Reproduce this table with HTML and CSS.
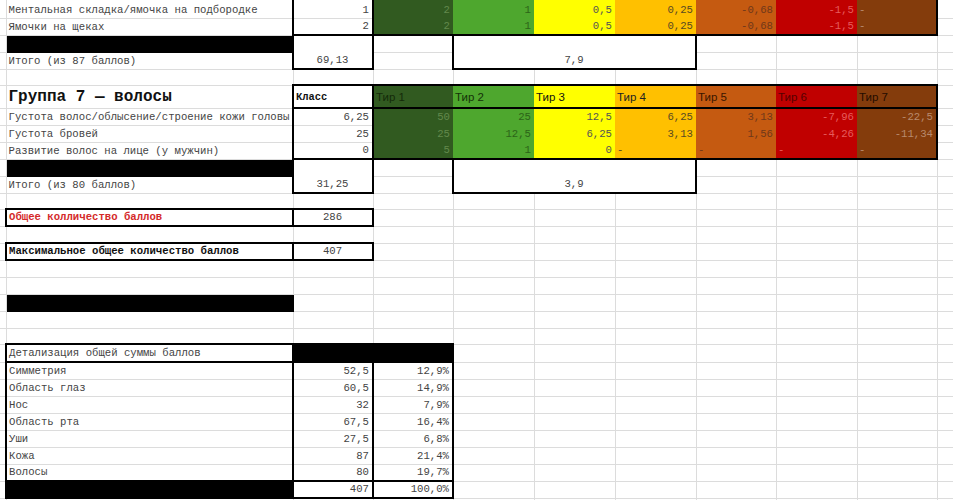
FILE: index.html
```html
<!DOCTYPE html>
<html lang="ru">
<head>
<meta charset="utf-8">
<title>Группа 7 — волосы</title>
<link rel="stylesheet" href="styles.css">
</head>
<body>
<table class="sheet">
<colgroup>
<col class="c0"><col class="ca"><col class="cb"><col class="cc"><col class="cd"><col class="ce"><col class="cf"><col class="cg"><col class="ch"><col class="ci"><col class="cj">
</colgroup>
<tbody>
<tr class="h18 first"><td></td><td>Ментальная складка/ямочка на подбородке</td><td class="num bl br">1</td><td class="num t t1">2</td><td class="num t t2">1</td><td class="num t t3">0,5</td><td class="num t t4">0,25</td><td class="num t t5">-0,68</td><td class="num t t6">-1,5</td><td class="t t7 br">-</td><td></td></tr>
<tr class="h17"><td></td><td>Ямочки на щеках</td><td class="num bl br bb">2</td><td class="num t t1 bb">2</td><td class="num t t2 bb">1</td><td class="num t t3 bb">0,5</td><td class="num t t4 bb">0,25</td><td class="num t t5 bb">-0,68</td><td class="num t t6 bb">-1,5</td><td class="t t7 br bb">-</td><td></td></tr>
<tr class="h17"><td></td><td class="blk"></td><td class="ctr bx" rowspan="2">69,13</td><td></td><td class="ctr bx" colspan="3" rowspan="2">7,9</td><td></td><td></td><td></td><td></td></tr>
<tr class="h17"><td></td><td>Итого (из 87 баллов)</td><td></td><td></td><td></td><td></td><td></td></tr>
<tr class="h16"><td></td><td></td><td></td><td></td><td></td><td></td><td></td><td></td><td></td><td></td><td></td></tr>
<tr class="h23"><td></td><td class="grp">Группа 7 — волосы</td><td class="kl bt bl br bb">Класс</td><td class="th t t1 bt bb">Тир 1</td><td class="th t t2 bt bb">Тир 2</td><td class="th t t3 bt bb">Тир 3</td><td class="th t t4 bt bb">Тир 4</td><td class="th t t5 bt bb">Тир 5</td><td class="th t t6 bt bb">Тир 6</td><td class="th t t7 bt br bb">Тир 7</td><td></td></tr>
<tr class="h17"><td></td><td>Густота волос/облысение/строение кожи головы</td><td class="num bl br">6,25</td><td class="num t t1">50</td><td class="num t t2">25</td><td class="num t t3">12,5</td><td class="num t t4">6,25</td><td class="num t t5">3,13</td><td class="num t t6">-7,96</td><td class="num t t7 br">-22,5</td><td></td></tr>
<tr class="h17"><td></td><td>Густота бровей</td><td class="num bl br">25</td><td class="num t t1">25</td><td class="num t t2">12,5</td><td class="num t t3">6,25</td><td class="num t t4">3,13</td><td class="num t t5">1,56</td><td class="num t t6">-4,26</td><td class="num t t7 br">-11,34</td><td></td></tr>
<tr class="h17"><td></td><td>Развитие волос на лице (у мужчин)</td><td class="num bl br bb">0</td><td class="num t t1 bb">5</td><td class="num t t2 bb">1</td><td class="num t t3 bb">0</td><td class="t t4 bb">-</td><td class="t t5 bb">-</td><td class="t t6 bb">-</td><td class="t t7 br bb">-</td><td></td></tr>
<tr class="h17"><td></td><td class="blk"></td><td class="ctr bx" rowspan="2">31,25</td><td></td><td class="ctr bx" colspan="3" rowspan="2">3,9</td><td></td><td></td><td></td><td></td></tr>
<tr class="h17"><td></td><td>Итого (из 80 баллов)</td><td></td><td></td><td></td><td></td><td></td></tr>
<tr class="h16"><td></td><td></td><td></td><td></td><td></td><td></td><td></td><td></td><td></td><td></td><td></td></tr>
<tr class="h17"><td></td><td class="bx red">Общее колличество баллов</td><td class="ctr bx">286</td><td></td><td></td><td></td><td></td><td></td><td></td><td></td><td></td></tr>
<tr class="h17"><td></td><td></td><td></td><td></td><td></td><td></td><td></td><td></td><td></td><td></td><td></td></tr>
<tr class="h17"><td></td><td class="bx strong">Максимальное общее количество баллов</td><td class="ctr bx">407</td><td></td><td></td><td></td><td></td><td></td><td></td><td></td><td></td></tr>
<tr class="h17"><td></td><td></td><td></td><td></td><td></td><td></td><td></td><td></td><td></td><td></td><td></td></tr>
<tr class="h17"><td></td><td></td><td></td><td></td><td></td><td></td><td></td><td></td><td></td><td></td><td></td></tr>
<tr class="h17"><td></td><td class="blk"></td><td></td><td></td><td></td><td></td><td></td><td></td><td></td><td></td><td></td></tr>
<tr class="h17"><td></td><td></td><td></td><td></td><td></td><td></td><td></td><td></td><td></td><td></td><td></td></tr>
<tr class="h16"><td></td><td></td><td></td><td></td><td></td><td></td><td></td><td></td><td></td><td></td><td></td></tr>
<tr class="h18"><td></td><td class="bx">Детализация общей суммы баллов</td><td class="blk bt bb"></td><td class="blk bt br bb"></td><td></td><td></td><td></td><td></td><td></td><td></td><td></td></tr>
<tr class="h17"><td></td><td class="bl">Симметрия</td><td class="num bl br">52,5</td><td class="num br">12,9%</td><td></td><td></td><td></td><td></td><td></td><td></td><td></td></tr>
<tr class="h17"><td></td><td class="bl">Область глаз</td><td class="num bl br">60,5</td><td class="num br">14,9%</td><td></td><td></td><td></td><td></td><td></td><td></td><td></td></tr>
<tr class="h17"><td></td><td class="bl">Нос</td><td class="num bl br">32</td><td class="num br">7,9%</td><td></td><td></td><td></td><td></td><td></td><td></td><td></td></tr>
<tr class="h17"><td></td><td class="bl">Область рта</td><td class="num bl br">67,5</td><td class="num br">16,4%</td><td></td><td></td><td></td><td></td><td></td><td></td><td></td></tr>
<tr class="h17"><td></td><td class="bl">Уши</td><td class="num bl br">27,5</td><td class="num br">6,8%</td><td></td><td></td><td></td><td></td><td></td><td></td><td></td></tr>
<tr class="h17"><td></td><td class="bl">Кожа</td><td class="num bl br">87</td><td class="num br">21,4%</td><td></td><td></td><td></td><td></td><td></td><td></td><td></td></tr>
<tr class="h17"><td></td><td class="bl">Волосы</td><td class="num bl br">80</td><td class="num br">19,7%</td><td></td><td></td><td></td><td></td><td></td><td></td><td></td></tr>
<tr class="h17"><td></td><td class="blk bl bt bb"></td><td class="num bx">407</td><td class="num bx">100,0%</td><td></td><td></td><td></td><td></td><td></td><td></td><td></td></tr>
<tr class="h17"><td></td><td></td><td></td><td></td><td></td><td></td><td></td><td></td><td></td><td></td><td></td></tr>
</tbody>
</table>
</body>
</html>
```

FILE: styles.css
```css
* { box-sizing: border-box; }
html, body { margin: 0; padding: 0; background: #fff; }
body { width: 953px; height: 500px; overflow: hidden; }

.sheet {
  border-collapse: collapse;
  table-layout: fixed;
  width: 1037px;
  font-family: "Liberation Mono", "Courier New", monospace;
  font-size: 10.65px;
  color: #444;
}
.sheet td {
  border: 1px solid #dcdcdc;
  padding: 0 3px 2px 2px;
  vertical-align: bottom;
  white-space: nowrap;
  overflow: hidden;
  line-height: 12px;
}
.sheet tr td:first-child { border-left: none; }
.sheet tr.first td { border-top: none; }

.c0 { width: 6px; }
.ca { width: 287px; }
.cb { width: 80px; }
.cc { width: 80px; }
.cd { width: 81px; }
.ce { width: 81px; }
.cf { width: 81px; }
.cg { width: 80px; }
.ch { width: 81px; }
.ci { width: 80px; }
.cj { width: 100px; }

.h16 { height: 16px; }
.h17 { height: 17px; }
.h18 { height: 18px; }
.h23 { height: 23px; }

.sheet .num { text-align: right; }
.sheet .ctr { text-align: center; }

.sheet .t { border-style: none; }
.sheet .t1 { background: #315a20; color: #62894c; }
.sheet .t2 { background: #4ea72e; color: #2c6418; }
.sheet .t3 { background: #ffff00; color: #555; }
.sheet .t4 { background: #ffc000; color: #5a4a22; }
.sheet .t5 { background: #c55a11; color: #70381a; }
.sheet .t6 { background: #c00000; color: #e65c5c; }
.sheet .t7 { background: #843c0c; color: #b88a6c; }

.sheet .th {
  font-family: "Liberation Sans", Arial, sans-serif;
  font-size: 11.5px;
  padding-bottom: 4px;
  padding-left: 2px;
}
.sheet .th.t1 { color: #142a09; }
.sheet .th.t2 { color: #143208; }
.sheet .th.t3 { color: #111; }
.sheet .th.t4 { color: #222; }
.sheet .th.t5 { color: #3a1600; }
.sheet .th.t6 { color: #560000; }
.sheet .th.t7 { color: #240c00; }

.sheet .grp {
  font-size: 16px;
  font-weight: bold;
  color: #111;
  line-height: 18px;
  padding-bottom: 2px;
}
.sheet .kl {
  font-weight: bold;
  font-size: 10.4px;
  color: #111;
  padding-bottom: 4px;
}
.sheet .red { color: #d42a2a; font-weight: bold; }
.sheet .strong { color: #111; font-weight: bold; }

.sheet .blk { background: #000; border-color: #000; }

.sheet .bt { border-top: 2px solid #000; }
.sheet .bb { border-bottom: 2px solid #000; }
.sheet .bl { border-left: 2px solid #000; }
.sheet .br { border-right: 2px solid #000; }
.sheet .bx { border: 2px solid #000; }
```
